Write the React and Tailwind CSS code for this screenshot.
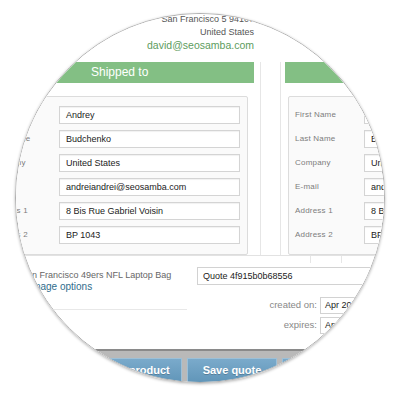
import React from 'react';

const rows = [
  { label: 'First Name', value: 'Andrey' },
  { label: 'Last Name', value: 'Budchenko' },
  { label: 'Company', value: 'United States' },
  { label: 'E-mail', value: 'andreiandrei@seosamba.com' },
  { label: 'Address 1', value: '8 Bis Rue Gabriel Voisin' },
  { label: 'Address 2', value: 'BP 1043' },
];

function AddressColumn({ title }) {
  return (
    <div className="w-[274px] shrink-0 flex flex-col">
      <div className="h-[21px] bg-[#83bf84] pl-[111px] text-[12px] leading-[21px] text-white">{title}</div>
      <div className="mt-[13px] ml-[3px] mr-[6px] h-[159px] rounded-[2px] border border-[#dcdcdc] bg-[#fafafa] pt-[9px] pr-[7px] flex flex-col gap-[6px]">
        {rows.map((r) => (
          <div key={r.label} className="flex items-center h-[18px]">
            <div className="w-[75px] shrink-0 pl-[6px] text-[8px] text-[#7c7c7c] tracking-[0.2px]">{r.label}</div>
            <div className="w-[181px] h-[18px] border border-[#d4d4d4] bg-white pl-[6px] text-[9px] leading-[16px] text-[#222] shadow-[inset_0_1px_1px_rgba(0,0,0,0.06)]">
              {r.value}
            </div>
          </div>
        ))}
      </div>
    </div>
  );
}

export default function App() {
  return (
    <div className="w-[400px] h-[400px] bg-white overflow-hidden" style={{ fontFamily: '"Liberation Sans", Arial, sans-serif' }}>
      <div className="ml-[15px] mt-[13px] w-[370px] h-[370px] rounded-full overflow-hidden border border-[#b0b0b0] shadow-[0_1px_3px_rgba(0,0,0,0.3)]">
        <div className="-ml-[16px] -mt-[14px] w-[400px] h-[400px] bg-white">
          <div className="-ml-[20px] w-[640px]">
            {/* billing address */}
            <div className="w-[274px] pt-[13px] h-[62px] text-right">
              <div className="h-[13px] leading-[13px] text-[9px] text-[#555]">San Francisco 5 94107</div>
              <div className="h-[13px] leading-[13px] text-[9px] text-[#555]">United States</div>
              <div className="h-[13px] leading-[13px] text-[10.5px] text-[#5d9c5e]">david@seosamba.com</div>
            </div>

            {/* addresses */}
            <div className="flex h-[193px]">
              <AddressColumn title="Shipped to" />
              <div className="ml-[6px] w-[21px] shrink-0 border-x border-[#e6e6e6]" />
              <div className="ml-[4px]">
                <AddressColumn title="Billed to" />
              </div>
            </div>

            {/* table header strip */}
            <div className="flex h-[8px] border-t border-[#e2e2e2]">
              <div className="w-[330px] shrink-0" />
              <div className="w-[32px] shrink-0 border-x border-[#e6e6e6]" />
            </div>

            {/* product + quote */}
            <div className="flex h-[86px]">
              <div className="w-[207px] shrink-0 flex flex-col">
                <div className="h-[47px] pl-[41px] pt-[6px] border-b border-[#e8e8e8]">
                  <div className="h-[12px] leading-[12px] text-[9px] text-[#666]">San Francisco 49ers NFL Laptop Bag</div>
                  <div className="h-[12px] leading-[12px] text-[10px] text-[#2f6d8c]">Manage options</div>
                </div>
              </div>
              <div className="ml-[10px] pt-[4px] flex flex-col">
                <div className="w-[240px] h-[18px] border border-[#d2d2d2] bg-white pl-[5px] text-[9px] leading-[16px] text-[#222]">
                  Quote 4f915b0b68556
                </div>
                <div className="mt-[12px] flex items-center h-[17px]">
                  <div className="w-[120px] text-right text-[9.5px] text-[#888]">created on:</div>
                  <div className="ml-[3px] w-[70px] h-[17px] border border-[#d2d2d2] bg-white pl-[4px] text-[9px] leading-[15px] text-[#222]">Apr 20</div>
                </div>
                <div className="mt-[3px] flex items-center h-[17px]">
                  <div className="w-[120px] text-right text-[9.5px] text-[#888]">expires:</div>
                  <div className="ml-[3px] w-[70px] h-[17px] border border-[#d2d2d2] bg-white pl-[4px] text-[9px] leading-[15px] text-[#222]">Apr 27</div>
                </div>
              </div>
            </div>

            {/* action bar */}
            <div className="border-t-2 border-[#8a8a8a] bg-[#b9b9b9] h-[60px] pt-[7px] pl-[112px] flex gap-[5px] items-start">
              {['Add product', 'Save quote', 'Send quote'].map((b) => (
                <div
                  key={b}
                  className="w-[90px] h-[26px] border border-[#9cc0d8] bg-gradient-to-b from-[#7aaacb] to-[#6095b8] text-center text-white font-bold text-[11px] leading-[22px] [text-shadow:0_1px_0_rgba(0,0,0,0.2)]"
                >
                  {b}
                </div>
              ))}
            </div>
          </div>
        </div>
      </div>
    </div>
  );
}
